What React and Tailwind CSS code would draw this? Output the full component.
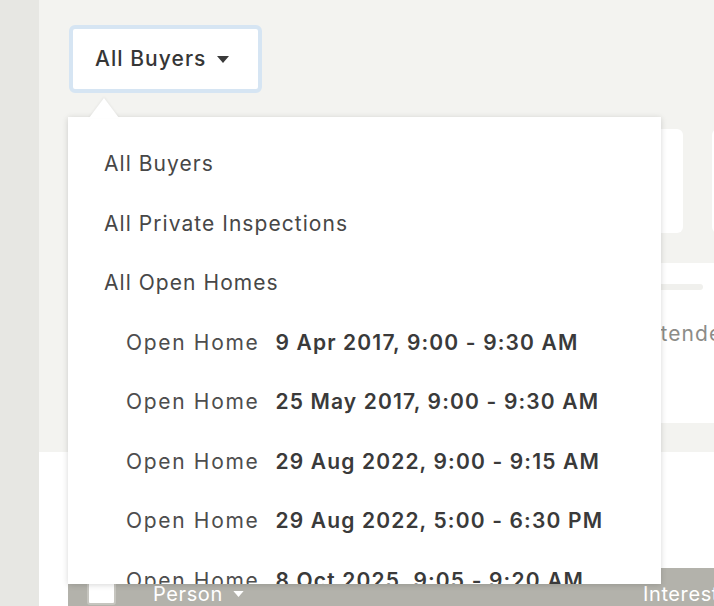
import React from "react";

const font = { fontFamily: "Inter, 'Noto Sans', sans-serif" };

const openHomes = [
  "9 Apr 2017, 9:00 - 9:30 AM",
  "25 May 2017, 9:00 - 9:30 AM",
  "29 Aug 2022, 9:00 - 9:15 AM",
  "29 Aug 2022, 5:00 - 6:30 PM",
  "8 Oct 2025, 9:05 - 9:20 AM",
];

function Caret({ className }) {
  return (
    <svg viewBox="0 0 12 7" className={className} fill="currentColor">
      <path d="M0 0h12L6 7z" />
    </svg>
  );
}

function Dropdown() {
  return (
    <div className="absolute left-[29px] top-[98px] w-[593px]">
      <svg
        viewBox="0 0 30 20"
        className="absolute left-[21px] top-0 w-[30px] h-[20px] drop-shadow-[0_-1px_1px_rgba(0,0,0,0.06)]"
      >
        <path d="M0 20 L15 0 L30 20 Z" fill="#fff" />
      </svg>
      <div className="mt-[19px] h-[467px] overflow-hidden bg-white shadow-[0_1px_6px_rgba(0,0,0,0.16)] pt-[17px] text-[21px] tracking-[0.05em]">
        {["All Buyers", "All Private Inspections", "All Open Homes"].map((t) => (
          <div
            key={t}
            className="h-[59.5px] flex items-center pl-[36px] text-[#474747]"
          >
            {t}
          </div>
        ))}
        {openHomes.map((d) => (
          <div
            key={d}
            className="h-[59.5px] flex items-center pl-[58px] whitespace-nowrap"
          >
            <span className="text-[#4d4d4d] tracking-[0.08em]">Open Home</span>
            <span className="ml-[16px] font-semibold text-[#3a3a3a] tracking-[0.055em]">{d}</span>
          </div>
        ))}
      </div>
    </div>
  );
}

export default function App() {
  return (
    <div className="flex h-[606px] w-[714px] overflow-hidden" style={font}>
      <div className="w-[39px] shrink-0 bg-[#e7e7e3]" />
      <div className="relative flex-1 min-w-0 bg-[#f3f3f0] flex flex-col">
        <div className="pl-[30px] pt-[25px]">
          <button className="flex items-center gap-[11px] h-[68px] w-[193px] px-[22px] rounded-[6px] border-[4px] border-[#d6e5f3] bg-white text-[21px] font-medium tracking-[0.05em] text-[#363636]">
            All Buyers
            <Caret className="w-[12px] h-[7px] text-[#3a3a3a]" />
          </button>
        </div>

        <div className="flex gap-[29px] pl-[31px] mt-[36px] shrink-0">
          {[0, 1, 2, 3].map((i) => (
            <div key={i} className="w-[185px] h-[104px] shrink-0 rounded-[6px] bg-white" />
          ))}
        </div>

        <div className="mt-[30px] ml-[31px] h-[160px] shrink-0 bg-white px-[20px] pt-[21px]">
          <div className="h-[6px] w-[613px] rounded-full bg-[#f0f0ed]" />
          <div className="mt-[28px] pl-[548px] text-[21px] tracking-[0.05em] text-[#8c8c88] whitespace-nowrap">
            Attended
          </div>
        </div>

        <div className="mt-[29px] flex-1 bg-white pt-[116px]">
          <div className="ml-[29px] h-[38px] bg-[#b3b2ab] flex items-center text-white text-[20px] tracking-[0.03em] whitespace-nowrap">
            <div className="ml-[19px] mt-[12px] w-[29px] h-[24px] shrink-0 rounded-[3px] border-2 border-[#c6c5bf] bg-white" />
            <span className="ml-[37px] mt-[14px] w-[490px] shrink-0 flex items-center gap-[10px]">
              Person <Caret className="w-[11px] h-[6px]" />
            </span>
            <span className="mt-[14px]">Interested</span>
          </div>
        </div>

        <Dropdown />
      </div>
    </div>
  );
}
